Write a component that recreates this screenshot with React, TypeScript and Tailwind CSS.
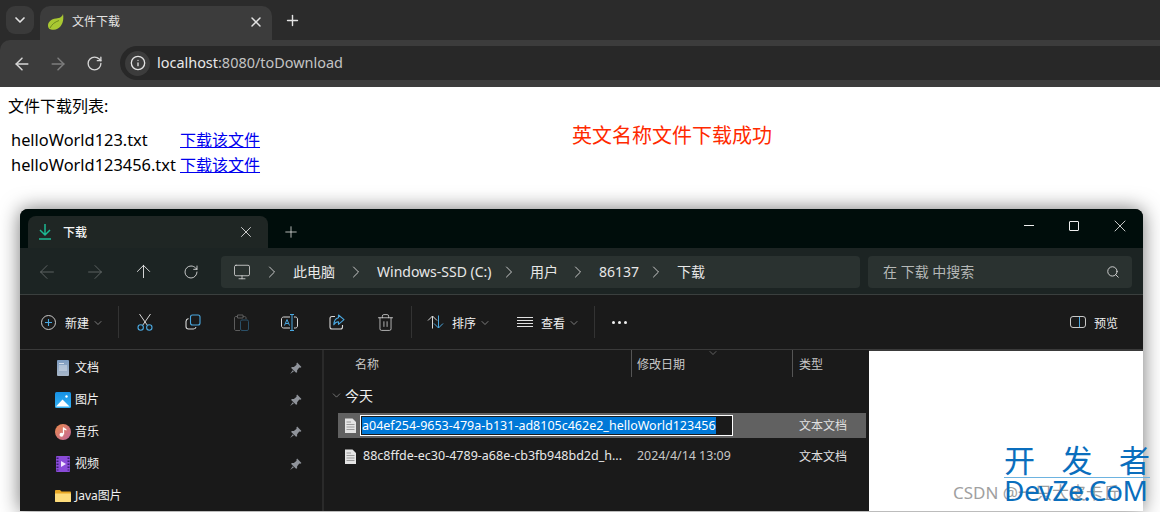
import {
  ArrowLeft,
  ArrowRight,
  ArrowUp,
  ChevronDown,
  ChevronRight,
  Info,
  Monitor,
  Plus,
  RotateCw,
  Search,
  Trash2,
  X,
} from "lucide-react";

const crumbs = [
  { label: "此电脑", w: "w-[42px]" },
  { label: "Windows-SSD (C:)", w: "w-[111px]" },
  { label: "用户", w: "w-[27px]" },
  { label: "86137", w: "w-[36px]" },
  { label: "下载", w: "w-[28px]" },
];

function Leaf() {
  return (
    <svg width="17" height="16" viewBox="0 0 17 16">
      <path d="M16 0C15 3 13 4 9 4.500C4 5 1 8 1 11.500C1 13 1.500 14 2.500 15C3.500 15.500 5 16 7 15.800C12 15.500 16 11 16.300 4.500C16.400 3 16.300 1.500 16 0Z" fill="#a9c832" />
      <path d="M3 14C5 10 8 8 12 6.500" stroke="#6f8a1f" strokeWidth="1" fill="none" />
    </svg>
  );
}

function Scissors() {
  return (
    <svg width="16" height="18" viewBox="0 0 16 18" fill="none">
      <path d="M2.500 1L10.500 12.500M13.500 1L5.500 12.500" stroke="#d8d8d8" strokeWidth="1" />
      <circle cx="3.700" cy="14.500" r="2.700" stroke="#4aa8e0" strokeWidth="1.100" />
      <circle cx="12.300" cy="14.500" r="2.700" stroke="#4aa8e0" strokeWidth="1.100" />
    </svg>
  );
}

function CopyIcon() {
  return (
    <svg width="16" height="16" viewBox="0 0 16 16" fill="none">
      <rect x="5.500" y="1" width="9.500" height="10" rx="2" stroke="#4aa8e0" strokeWidth="1.100" />
      <path d="M3.500 4.500C2 5 1 5.800 1 7.500V12.500C1 14 2 15 3.500 15H8.500C10 15 10.800 14 11 13" stroke="#d8d8d8" strokeWidth="1.100" />
    </svg>
  );
}

function PasteIcon() {
  return (
    <svg width="15" height="17" viewBox="0 0 15 17" fill="none">
      <path d="M3.500 2.500H2C1 2.500 .5 3 .5 4V15C.5 16 1 16.500 2 16.500H6M9 2.500H10.500C11.500 2.500 12 3 12 4V5M3.500 1H9V4H3.500Z" stroke="#5c5c5c" />
      <rect x="6.500" y="6" width="8" height="10.500" rx="1.500" stroke="#2b5068" />
    </svg>
  );
}

function RenameIcon() {
  return (
    <svg width="17" height="17" viewBox="0 0 17 17" fill="none">
      <path d="M9 3H2.500C1.500 3 .5 4 .5 5V12C.5 13 1.500 14 2.500 14H9M13 3H14.500C15.500 3 16.500 4 16.500 5V12C16.500 13 15.500 14 14.500 14H13" stroke="#d8d8d8" />
      <path d="M9 .5H13M11 .5V16.500M9 16.500H13" stroke="#4aa8e0" />
      <path d="M3.500 11.500L6 5.500L8.500 11.500M4.500 9.500H7.500" stroke="#4aa8e0" />
    </svg>
  );
}

function ShareIcon() {
  return (
    <svg width="16" height="16" viewBox="0 0 16 16" fill="none">
      <path d="M6 2.500H3C1.800 2.500 1 3.300 1 4.500V13C1 14.200 1.800 15 3 15H11.500C12.700 15 13.500 14.200 13.500 13V11" stroke="#d8d8d8" strokeWidth="1.100" />
      <path d="M9.500 1L15 5.700L9.500 10.300V7.800C7.500 7.800 6 8.700 4.800 10.700C5 7 6.800 4.200 9.500 3.700Z" stroke="#4aa8e0" strokeWidth="1.100" strokeLinejoin="round" />
    </svg>
  );
}

function SortIcon() {
  return (
    <svg width="17" height="14" viewBox="0 0 17 14" fill="none">
      <path d="M5.500 13.500V1M1 5.500L5.500 1L10 5.500" stroke="#d8d8d8" strokeWidth="1" />
      <path d="M11.500 .5V13M7 8.500L11.500 13L16 8.500" stroke="#4aa8e0" strokeWidth="1" />
    </svg>
  );
}

function PinIcon() {
  return (
    <svg width="13" height="13" viewBox="0 0 12 12" fill="#8f939a">
      <path d="M7.500 .5L11.500 4.500L10.500 5.200L9.500 5L7.500 7.500L7.500 9.500L6.500 10L2 5.500L2.500 4.500L4.500 4.500L7 2.500L6.800 1.500Z" />
      <path d="M3.500 7.500L1 11L4.500 8.500Z" />
    </svg>
  );
}

function DocIcon() {
  return (
    <svg width="12" height="16" viewBox="0 0 12 16">
      <defs>
        <linearGradient id="doc" x1="0" y1="0" x2="0" y2="1">
          <stop offset="0" stopColor="#7d9cc0" />
          <stop offset="1" stopColor="#a8b7c9" />
        </linearGradient>
      </defs>
      <rect width="12" height="16" rx="1" fill="url(#doc)" />
      <path d="M2 3.500H7M2 6H10M2 8H10M2 10H10" stroke="#d5dee9" strokeWidth="1" />
    </svg>
  );
}

function PictureIcon() {
  return (
    <svg width="16" height="16" viewBox="0 0 16 16">
      <defs>
        <linearGradient id="pic" x1="0" y1="0" x2="0" y2="1">
          <stop offset="0" stopColor="#1590e3" />
          <stop offset="1" stopColor="#36b2f5" />
        </linearGradient>
      </defs>
      <rect width="16" height="16" rx="1.500" fill="url(#pic)" />
      <path d="M1 14.500L7.500 7.500L14.500 14.500Z" fill="#ffffff" />
      <circle cx="11.500" cy="4.500" r="1.200" fill="#ffffff" />
    </svg>
  );
}

function MusicIcon() {
  return (
    <svg width="16" height="16" viewBox="0 0 16 16">
      <defs>
        <linearGradient id="mus" x1="0" y1="0" x2="1" y2="1">
          <stop offset="0" stopColor="#e98a4c" />
          <stop offset="1" stopColor="#c2669b" />
        </linearGradient>
      </defs>
      <circle cx="8" cy="8" r="8" fill="url(#mus)" />
      <path d="M8.500 3.500V10.500" stroke="#fff" strokeWidth="1.300" />
      <path d="M8.500 3.300C9.500 4.500 11 4.500 11.500 5.500V6.500C10.500 6 9.500 5.800 8.500 5.500Z" fill="#fff" />
      <circle cx="6.500" cy="10.800" r="2" fill="#fff" />
    </svg>
  );
}

function VideoIcon() {
  return (
    <svg width="14" height="16" viewBox="0 0 14 16">
      <rect width="14" height="16" rx="1" fill="#8a4bd8" />
      <path d="M1.500 1.500V14.500M12.500 1.500V14.500" stroke="#3a1e70" strokeWidth="2" strokeDasharray="1.500 1.500" />
      <path d="M5 5L10 8L5 11Z" fill="#f0e6ff" />
    </svg>
  );
}

function FolderIcon() {
  return (
    <svg width="16" height="12" viewBox="0 0 16 12">
      <path d="M0 1C0 .5 .5 0 1 0H5L6.500 1.500H15C15.500 1.500 16 2 16 2.500V11C16 11.500 15.500 12 15 12H1C.5 12 0 11.500 0 11Z" fill="#e8a826" />
      <path d="M0 3.500H16V11C16 11.500 15.500 12 15 12H1C.5 12 0 11.500 0 11Z" fill="#fddc7c" />
    </svg>
  );
}

function TextFileIcon() {
  return (
    <svg width="11" height="15" viewBox="0 0 11 15">
      <path d="M0 .5H7.500L11 4V15H0Z" fill="#e4e4e4" />
      <path d="M1.500 4H6M1.500 6.500H9.500M1.500 9H9.500M1.500 11.500H9.500" stroke="#9a9a9a" strokeWidth="1" />
    </svg>
  );
}

function NavItem({ label, icon, pinned }: { label: string; icon: React.ReactNode; pinned?: boolean }) {
  return (
    <div className="flex h-8 items-center">
      <span className="flex w-[17px] justify-center">{icon}</span>
      <span className="ml-[4px] flex-1 text-[12px] text-[#f2f2f2]">{label}</span>
      {pinned && <PinIcon />}
    </div>
  );
}

export default function App() {
  return (
    <div className="relative h-[512px] w-[1160px] overflow-hidden bg-white font-['Noto_Sans','Noto_Sans_CJK_SC',sans-serif]">
      {/* browser chrome */}
      <div className="bg-[#2b2b2b]">
        <div className="flex h-10 pl-[6px] pt-[6px]">
          <button className="flex h-7 w-7 items-center justify-center rounded-[9px] bg-[#3a3a3a] text-[#e3e3e3]">
            <ChevronDown size={16} strokeWidth={2.500} />
          </button>
          <div className="ml-[6px] flex h-[34px] w-[232px] items-center rounded-t-[10px] bg-[#3c3c3c] pb-[2px] pl-[7px] pr-[8px]">
            <Leaf />
            <span className="ml-2 flex-1 text-[12px] text-[#e3e3e3]">文件下载</span>
            <X size={16} strokeWidth={2.200} className="text-[#e3e3e3]" />
          </div>
          <Plus size={17} strokeWidth={2} className="ml-[12px] mt-[6px] text-[#e3e3e3]" />
        </div>
        <div className="flex h-[47px] items-center rounded-tl-[10px] bg-[#3c3c3c] pl-[12px]">
          <ArrowLeft size={20} strokeWidth={1.800} className="text-[#d6d6d6]" />
          <ArrowRight size={20} strokeWidth={1.800} className="ml-[16px] text-[#7d7d7d]" />
          <RotateCw size={17} strokeWidth={1.900} className="ml-[18px] text-[#d6d6d6]" />
          <div className="mb-[1px] ml-[17px] flex h-[34px] flex-1 items-center rounded-l-full bg-[#282828] pl-[5px]">
            <span className="flex h-[25px] w-[25px] items-center justify-center rounded-full bg-[#3c3c3c]">
              <Info size={16} strokeWidth={2} className="text-[#e3e3e3]" />
            </span>
            <span className="ml-[7px] text-[14.450px] text-[#e8e8e8]">
              localhost<span className="text-[#c4c4c4]">:8080/toDownload</span>
            </span>
          </div>
        </div>
      </div>

      {/* page */}
      <div className="pl-2 pt-2 text-[16px] leading-[22px] text-black">
        <p>文件下载列表:</p>
        <div className="flex">
          <div className="mt-3 ml-[3px] grid grid-cols-[169px_auto] gap-y-[3px]">
            <span className="text-[16.400px]">helloWorld123.txt</span>
            <a className="text-[#0000ee] underline">下载该文件</a>
            <span className="text-[16.400px]">helloWorld123456.txt</span>
            <a className="text-[#0000ee] underline">下载该文件</a>
          </div>
          <p className="ml-[312px] mt-[5px] text-[20px] leading-[28px] text-[#ff2a00]">英文名称文件下载成功</p>
        </div>
      </div>

      {/* explorer window */}
      <div className="ml-5 mt-[33px] w-[1123px] overflow-hidden rounded-t-[8px] bg-[#1a1a1a] shadow-[0_0_20px_rgba(0,0,0,0.55)]">
        <div className="flex h-[39px] items-end bg-[#000d0b] pl-2">
          <div className="flex h-8 w-[240px] items-center rounded-t-[8px] bg-[#1f2624] pl-[10px] pr-[13px]">
            <svg width="14" height="16" viewBox="0 0 14 16" fill="none" stroke="#1db992" strokeWidth="1.500">
              <path d="M7 0V10M2 6L7 11L12 6M1 15H13" />
            </svg>
            <span className="ml-[11px] flex-1 pt-[1px] text-[12px] font-medium text-[#f5f5f5]">下载</span>
            <X size={18} strokeWidth={1.100} className="text-[#eeeeee]" />
          </div>
          <Plus size={18} strokeWidth={1} className="mb-[7px] ml-[14px] text-[#eeeeee]" />
          <div className="mb-[16px] ml-auto flex h-[13px] items-center text-[#eeeeee]">
            <span className="h-px w-[10px] bg-[#eeeeee]" />
            <span className="ml-[35px] h-[10px] w-[10px] rounded-[1px] border border-[#eeeeee]" />
            <X size={20} strokeWidth={1} className="ml-[31px] mr-[13px]" />
          </div>
        </div>
        <div className="flex h-[47px] items-center border-b border-[#3a3f3e] bg-[#1c2423] pl-[3px] pt-[1px]">
          <span className="flex w-12 justify-center"><ArrowLeft size={22} strokeWidth={0.900} className="text-[#6a6f6e]" /></span>
          <span className="flex w-12 justify-center"><ArrowRight size={22} strokeWidth={0.900} className="text-[#6a6f6e]" /></span>
          <span className="flex w-12 justify-center"><ArrowUp size={21} strokeWidth={1} className="text-[#eeeeee]" /></span>
          <span className="flex w-12 justify-center"><RotateCw size={16} strokeWidth={1.200} className="text-[#eeeeee]" /></span>
          <div className="ml-[6px] flex h-8 w-[639px] items-center rounded-[4px] bg-[#2a3230] pl-[12px]">
            <Monitor size={18} strokeWidth={1.100} className="text-[#d8d8d8]" />
            {crumbs.map((c) => (
              <div key={c.label} className="flex items-center">
                <ChevronRight size={20} strokeWidth={1.100} className="mx-[11px] text-[#d8d8d8]" />
                <span className={`${c.w} whitespace-nowrap text-[14px] text-[#e8e8e8]`}>{c.label}</span>
              </div>
            ))}
          </div>
          <div className="ml-2 flex h-8 w-[264px] items-center justify-between rounded-[4px] bg-[#2a3230] pl-[15px] pr-[12px]">
            <span className="text-[14px] text-[#b5b8b7]">在 下载 中搜索</span>
            <Search size={14} strokeWidth={1.500} className="text-[#e0e0e0]" />
          </div>
        </div>
        <div className="flex h-[55px] items-center border-b border-[#3a3a3a] bg-[#1a1a1a] pl-[21px] pr-[25px]">
          <svg width="15" height="15" viewBox="0 0 15 15" fill="none">
            <circle cx="7.500" cy="7.500" r="7" stroke="#c8c8c8" />
            <path d="M7.500 4V11M4 7.500H11" stroke="#4aa8e0" strokeWidth="1.100" />
          </svg>
          <span className="ml-[9px] pt-[3px] text-[12px] text-[#f0f0f0]">新建</span>
          <ChevronDown size={12} strokeWidth={1.300} className="ml-[3px] mt-[2px] text-[#b0b0b0]" />
          <span className="ml-[14px] h-8 w-px bg-[#333333]" />
          <span className="ml-[2px] flex w-12 justify-center"><Scissors /></span>
          <span className="flex w-12 justify-center"><CopyIcon /></span>
          <span className="flex w-12 justify-center"><PasteIcon /></span>
          <span className="flex w-12 justify-center"><RenameIcon /></span>
          <span className="flex w-12 justify-center"><ShareIcon /></span>
          <span className="flex w-12 justify-center"><Trash2 size={19} strokeWidth={1} className="text-[#d8d8d8]" /></span>
          <span className="ml-[2px] h-8 w-px bg-[#333333]" />
          <span className="ml-[15px] flex w-[17px] items-center"><SortIcon /></span>
          <span className="ml-2 pt-[3px] text-[12px] text-[#f0f0f0]">排序</span>
          <ChevronDown size={12} strokeWidth={1.300} className="ml-[3px] mt-[2px] text-[#b0b0b0]" />
          <span className="ml-[26px] flex h-[11px] w-4 flex-col justify-between">
            <span className="h-px bg-[#e0e0e0]" />
            <span className="h-px bg-[#e0e0e0]" />
            <span className="h-px bg-[#e0e0e0]" />
            <span className="h-px bg-[#e0e0e0]" />
          </span>
          <span className="ml-2 pt-[3px] text-[12px] text-[#f0f0f0]">查看</span>
          <ChevronDown size={12} strokeWidth={1.300} className="ml-[3px] mt-[2px] text-[#b0b0b0]" />
          <span className="ml-[14px] h-8 w-px bg-[#333333]" />
          <span className="ml-[17px] flex gap-[3px]">
            <span className="h-[3px] w-[3px] rounded-full bg-[#f0f0f0]" />
            <span className="h-[3px] w-[3px] rounded-full bg-[#f0f0f0]" />
            <span className="h-[3px] w-[3px] rounded-full bg-[#f0f0f0]" />
          </span>
          <span className="ml-auto flex h-[12px] w-4 rounded-[3px] border border-[#c8c8c8]">
            <span className="ml-auto h-full w-[6px] rounded-r-[2px] border-l border-[#4aa8e0]" />
          </span>
          <span className="ml-2 pt-[3px] text-[12px] text-[#f0f0f0]">预览</span>
        </div>
        <div className="flex h-[161px]">
          <div className="w-[304px] border-r-2 border-[#2a2a2a] bg-[#191919] pl-[34px] pr-[20px] pt-[2px]">
            <NavItem label="文档" icon={<DocIcon />} pinned />
            <NavItem label="图片" icon={<PictureIcon />} pinned />
            <NavItem label="音乐" icon={<MusicIcon />} pinned />
            <NavItem label="视频" icon={<VideoIcon />} pinned />
            <NavItem label="Java图片" icon={<FolderIcon />} />
          </div>
          <div className="w-[545px] bg-[#1a1a1a] text-[12px]">
            <div className="grid h-[28px] grid-cols-[307px_161px_auto] text-[#c8c8c8]">
              <span className="pl-[31px] pt-[6px]">名称</span>
              <span className="relative mb-[1px] border-l border-[#555555] pl-[5px] pt-[6px]">
                修改日期
                <ChevronDown size={12} strokeWidth={1.100} className="absolute left-[75px] -top-[3px] text-[#9a9a9a]" />
              </span>
              <span className="mb-[1px] border-l border-[#555555] pl-[6px] pt-[6px]">类型</span>
            </div>
            <div className="flex h-[35px] items-center pl-[6px]">
              <ChevronDown size={13} strokeWidth={1.200} className="text-[#a0a0a0]" />
              <span className="ml-[2px] text-[14px] text-[#f0f0f0]">今天</span>
            </div>
            <div className="ml-[14px] flex h-[25px] w-[528px] items-center bg-[#616161] pl-[7px]">
              <TextFileIcon />
              <span className="ml-[4px] flex h-[21px] w-[373px] items-center border border-white bg-[#1a1a1a] pl-px">
                <span className="whitespace-nowrap bg-[#0078d7] text-[12.500px] leading-[17px] text-white">a04ef254-9653-479a-b131-ad8105c462e2_helloWorld123456</span>
              </span>
              <span className="ml-[66px] text-[#e0e0e0]">文本文档</span>
            </div>
            <div className="ml-[14px] mt-[6px] flex h-[25px] items-center pl-[7px] text-[#e8e8e8]">
              <TextFileIcon />
              <span className="ml-[7px] w-[274px] whitespace-nowrap text-[12.500px]">88c8ffde-ec30-4789-a68e-cb3fb948bd2d_h...</span>
              <span className="w-[162px] text-[12.400px] text-[#c8c8c8]">2024/4/14 13:09</span>
              <span className="text-[#e0e0e0]">文本文档</span>
            </div>
          </div>
          <div className="flex-1 border-t border-[#3a3a3a] bg-white" />
        </div>
      </div>

      {/* watermark */}
      <div className="absolute left-[953px] top-[483px] whitespace-nowrap text-[17px] leading-[20px] text-[#a0a0a0]">CSDN @一只大皮卡丘</div>
      <div className="absolute left-[1004px] top-[442px] w-[146px] text-[#0a6ebd]">
        <div className="flex justify-between border-b border-[#6db3e0] pt-[2px] text-[31px] leading-[33px]">
          <span>开</span>
          <span>发</span>
          <span>者</span>
        </div>
        <div className="-mt-[1px] whitespace-nowrap text-[28px] leading-[26px] tracking-[-0.5px]">DevZe.CoM</div>
      </div>
    </div>
  );
}
